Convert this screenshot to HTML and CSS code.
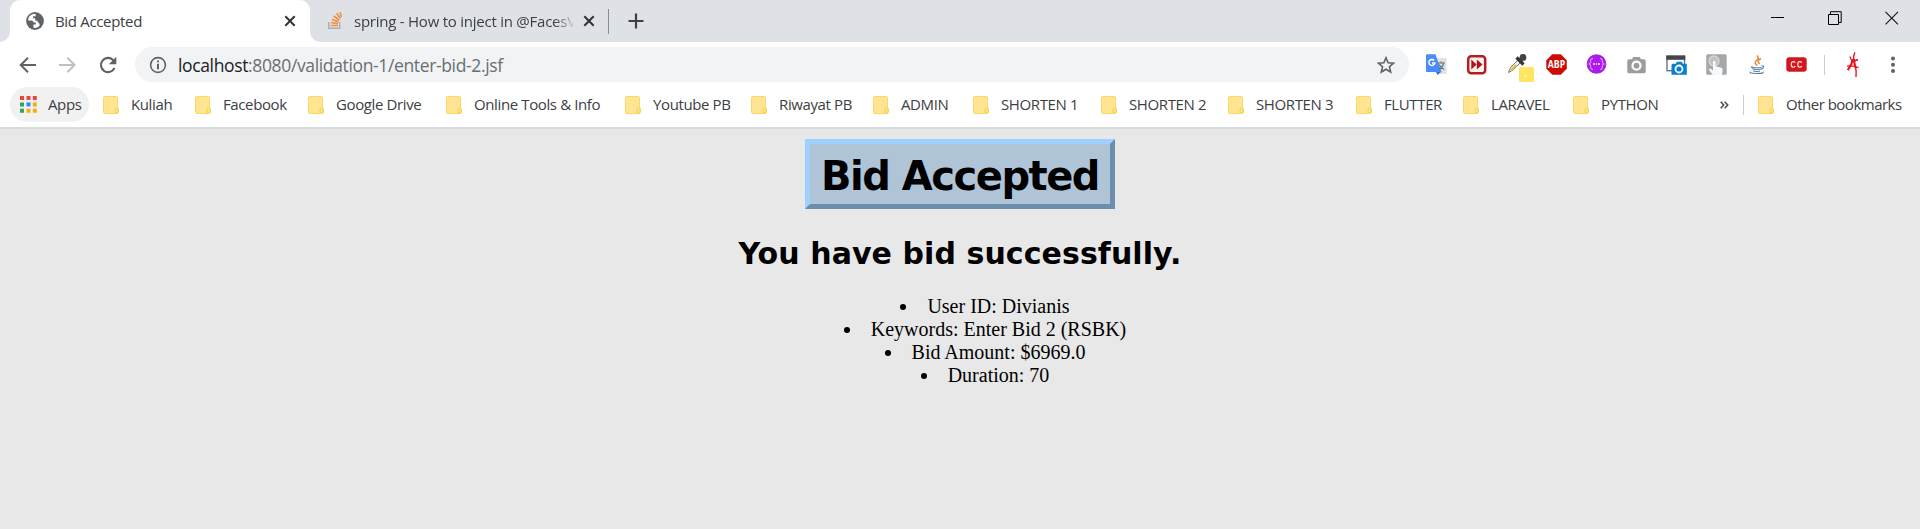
FILE: index.html
```html
<!DOCTYPE html>
<html lang="en">
<head>
<meta charset="utf-8">
<title>Bid Accepted</title>
<link rel="stylesheet" href="styles.css">
</head>
<body>
<svg class="defs" width="0" height="0">
  <symbol id="folder" viewBox="0 0 16 18">
    <path d="M1.5.5h12a1 1 0 0 1 1 1v10.200l1 1.300v3.500l-1.500 1H1.500a1 1 0 0 1-1-1v-15a1 1 0 0 1 1-1z" fill="#ffe591" stroke="#f9d867"/>
    <path d="M12 17v-4.300l1.500-1.200 1.500 1.500v3.500l-1.500.8z" fill="#ffe48a" stroke="#f5d052"/>
  </symbol>
  <symbol id="close" viewBox="0 0 12 12"><path d="M1.300 1.300l9.400 9.400M10.700 1.300L1.300 10.700" stroke="#303336" stroke-width="2"/></symbol>
</svg>

<header class="browser">
  <div class="tabstrip">
    <div class="tab tab-active">
      <svg class="favicon" width="18" height="18" viewBox="0 0 18 18"><circle cx="9" cy="9" r="8.900" fill="#5f6368"/><path d="M6.300 2.300C3.500 3.400 2 6 2.100 8.600h3.200c1.400 0 2 .9 2.300 1.800h2.200v2.200H7.500v3.200c2.600.5 4.800-.5 6.200-2.200l-.3-1.900c-.3-1-1.100-1.300-1.800-1.300V8.800h-1.200c-.7 0-1.200-.4-1.200-1V6.300H7.100V4.200h2.600V2.100c-1.200-.2-2.400-.1-3.400.2z" fill="#fff"/></svg>
      <span class="tab-title">Bid Accepted</span>
      <svg class="tab-close" width="12" height="12"><use href="#close"/></svg>
    </div>
    <div class="tab tab-idle">
      <svg class="favicon" width="17" height="18" viewBox="0 0 17 18"><path d="M1.700 10v6.200h11V10" fill="none" stroke="#aaadb2" stroke-width="1.500"/><path d="M3.800 13.500h7M4 10.500l7 1.300M4.900 7.300l6.600 2.600M6.800 4l5.500 4.300M9.600 1.300l3.900 5.300M13 .2l1.300 4.800" stroke="#f48b37" stroke-width="1.600"/></svg>
      <span class="tab-title">spring - How to inject in @FacesV</span>
      <svg class="tab-close" width="12" height="12"><use href="#close"/></svg>
    </div>
    <span class="tab-divider"></span>
    <svg class="new-tab" width="16" height="16" viewBox="0 0 16 16"><path d="M8 .5v15M.5 8h15" stroke="#3c4043" stroke-width="2.200"/></svg>
    <div class="window-controls">
      <svg width="14" height="14" viewBox="0 0 14 14"><path d="M0 6.500h13" stroke="#000"/></svg>
      <svg width="14" height="14" viewBox="0 0 14 14"><path d="M.5 3.500h10v10H.5zM2.500 3.500v-2.800h10.700v10.800H10.500" fill="none" stroke="#000"/></svg>
      <svg width="14" height="14" viewBox="0 0 14 14"><path d="M.5.8l12.500 12.500M13 .8L.5 13.300" stroke="#111" stroke-width="1.100"/></svg>
    </div>
  </div>

  <div class="toolbar">
    <nav class="nav">
      <svg width="18" height="18" viewBox="0 0 18 18"><path d="M17 9H2M9 1.700L1.700 9 9 16.300" fill="none" stroke="#5f6368" stroke-width="2"/></svg>
      <svg width="18" height="18" viewBox="0 0 18 18"><path d="M0 9h15M8.300 1.700L15.600 9l-7.300 7.300" fill="none" stroke="#bdc1c6" stroke-width="2"/></svg>
      <svg width="18" height="18" viewBox="0 0 18 18"><path d="M15.500 12A7.100 7.100 0 1 1 14 3.900l1.200 1.200" fill="none" stroke="#5f6368" stroke-width="2.100"/><path d="M17.300.800v7.400H9.900z" fill="#5f6368"/></svg>
    </nav>
    <div class="omnibox">
      <svg width="18" height="18" viewBox="0 0 18 18"><circle cx="9" cy="9" r="7.400" fill="none" stroke="#5f6368" stroke-width="1.600"/><path d="M9 4.400v1.900M9 7.800v5.500" stroke="#5f6368" stroke-width="2"/></svg>
      <span class="url"><b>localhost</b>:8080/validation-1/enter-bid-2.jsf</span>
      <svg class="star" width="18" height="18" viewBox="0 0 18 18"><path d="M9 1.800l2.150 4.900 5.300.5-4 3.550 1.200 5.250L9 13.200 4.350 16l1.200-5.250-4-3.550 5.300-.5z" fill="none" stroke="#5f6368" stroke-width="1.600"/></svg>
    </div>
    <div class="extensions">
      <svg viewBox="0 0 40 36"><path d="M20 11h9.500q1 0 1 1v14q0 1-1 1H24z" fill="#dfe1e4"/><path d="M11 7.300h8.500L25.500 25H11q-1 0-1-1V8.300q0-1 1-1z" fill="#4b8df8"/><path d="M20 25h5l-3.500 3z" fill="#3367d6"/><path d="M21.800 16h7M25.200 14.500v2M27.500 16.500q-1 4.500-5 6M23.200 17.500q1.500 3.500 5 5" fill="none" stroke="#5f7380" stroke-width="1.200"/><path d="M18.200 13.500a3 3 0 1 0 .6 2.600H16" fill="none" stroke="#fff" stroke-width="1.500"/></svg>
      <svg viewBox="0 0 40 36"><rect x="12.200" y="9.200" width="17" height="17" rx="3" fill="#fbf3f2" stroke="#b81d1d" stroke-width="2.500"/><path d="M15.300 12.500l5.300 5-5.300 5zM20.800 12.500l5.700 5-5.700 5z" fill="#b01515"/></svg>
      <svg viewBox="0 0 40 36"><path d="M12.500 25.500l2-5 8.500-8.500 2.500 2.500-8.500 8.500z" fill="#f2ede0" stroke="#73767a"/><path d="M14.500 23.500l5.500-5.500" stroke="#e4c94e" stroke-width="2.300"/><path d="M20.500 10.500l7 7M23.500 13.500l4-4" stroke="#333" stroke-width="3.200"/><circle cx="27" cy="10.500" r="3.400" fill="#444"/><rect x="23" y="20" width="15" height="15" rx="1.500" fill="#fee662"/><circle cx="29.500" cy="28.800" r=".8" fill="#fff"/></svg>
      <svg viewBox="0 0 40 36"><path d="M16.300 7.300h8.500l6 6v8.500l-6 6h-8.500l-6-6v-8.500z" fill="#cc0b05"/><text class="icon-text" x="20.500" y="21.300" textLength="17.500" lengthAdjust="spacingAndGlyphs">ABP</text></svg>
      <svg viewBox="0 0 40 36"><circle cx="20.500" cy="17" r="9.800" fill="#a91de8"/><path d="M17 11.500q-2.600 0-2.300 2.500.2 2.500-1.500 3 1.700.5 1.500 3-.3 2.500 2.300 2.500M24 11.500q2.600 0 2.300 2.500-.2 2.500 1.500 3-1.700.5-1.500 3 .3 2.500-2.300 2.500" fill="none" stroke="#dd95f5" stroke-width="1.200"/><path d="M17 17h2M19.800 17h1.400M22 17h2" stroke="#f4dcfb" stroke-width="1.600"/></svg>
      <svg viewBox="0 0 40 36"><path d="M13 12.300h3l1.200-2.300h6.600l1.200 2.300h3q1.700 0 1.700 1.500v11q0 1.500-1.700 1.500H13q-1.700 0-1.700-1.500v-11q0-1.500 1.700-1.500z" fill="#9c9c9c"/><circle cx="20.500" cy="18.700" r="4" fill="#9c9c9c" stroke="#fff" stroke-width="2.200"/></svg>
      <svg viewBox="0 0 40 36"><rect x="11" y="9.200" width="17.500" height="14.500" fill="#fff" stroke="#62696f" stroke-width="1.300"/><path d="M10.300 8.500h19v4.300h-19z" fill="#40464c"/><path d="M16.500 16.700h3.300l1-2h5l1 2h4v11H15.500v-10z" fill="#087fce"/><circle cx="23" cy="22" r="3.500" fill="#087fce" stroke="#fff" stroke-width="1.800"/></svg>
      <svg viewBox="0 0 40 36"><rect x="10.200" y="7.200" width="20.500" height="20.500" rx="1.500" fill="#a7a7a7"/><circle cx="18" cy="14" r="5" fill="#c2c2c2" stroke="#d7d7d7" stroke-width="1.300"/><path d="M16.800 28l-4-5.500q1-1.500 2.200-.5l2 1.500v-9q1.500-1.700 2.500 0v4.800l6 1.500q1.300.5 1.200 2l-.7 5.200z" fill="#f5faff"/></svg>
      <svg viewBox="0 0 40 36"><path d="M21 8.500q2.500 3-.5 5-3 2.200.8 5M25 11.500q-5 2-1.300 5.500" fill="none" stroke="#e9862d" stroke-width="1.500"/><path d="M16.500 19.500q-3 1.200 3 1.200t6-.8M16.500 21.800q3 1.400 8 .2M17 23.800q3 1.400 7 .2M14.500 24.800q-2 1.600 6 1.700t6.500-1.700M25.500 19q3-.5 2 1.500-1 1.700-3 1.700" fill="none" stroke="#557f9f" stroke-width="1.100"/></svg>
      <svg viewBox="0 0 40 36"><rect x="10.300" y="10.200" width="20.400" height="14.500" rx="3" fill="#d31720"/><path d="M19.300 15.700q-1-1.200-2.300-1-1.700.2-1.700 2.800t1.700 2.700q1.300.2 2.300-1M25.800 15.700q-1-1.200-2.300-1-1.700.2-1.700 2.800t1.700 2.700q1.300.2 2.300-1" fill="none" stroke="#ffdede" stroke-width="1.200"/></svg>
    </div>
    <span class="toolbar-divider"></span>
    <svg class="profile" width="14" height="26" viewBox="0 0 14 26"><path d="M9 .3Q7.400 3 7.600 7M4 4.500Q4.300 7 6.500 9M1 14.200Q6 13 12.700 15.500" fill="none" stroke="#ec1018" stroke-width="1.300"/><path d="M7 7Q6 12.500 1.800 18.200M8 7Q8.200 12 9.800 16.500" fill="none" stroke="#ec1018" stroke-width="2.100"/><path d="M9.600 15Q10.500 20 10 25M12 7.500L8.500 9" fill="none" stroke="#ec1018" stroke-width="1.400"/></svg>
    <svg class="menu" width="4" height="18" viewBox="0 0 4 18"><g fill="#5f6368"><circle cx="2" cy="2.500" r="2"/><circle cx="2" cy="8.700" r="2"/><circle cx="2" cy="15" r="2"/></g></svg>
  </div>

  <div class="bookmarks">
    <div class="apps">
      <svg width="17" height="17" viewBox="0 0 17 17"><path d="M0 0h4v4H0zM6.500 0h4v4h-4zM12.800 0h4v4h-4z" fill="#f0433a"/><path d="M0 6.400h4v4H0zM0 12.800h4v4H0z" fill="#2fa45a"/><path d="M6.500 6.400h4v4h-4z" fill="#2d8cf0"/><path d="M12.800 6.400h4v4h-4zM6.500 12.800h4v4h-4zM12.800 12.800h4v4h-4z" fill="#f5ad14"/></svg>
      <span>Apps</span>
    </div>
    <div class="folders">
      <div class="folder"><svg><use href="#folder"/></svg><span>Kuliah</span></div>
      <div class="folder"><svg><use href="#folder"/></svg><span>Facebook</span></div>
      <div class="folder"><svg><use href="#folder"/></svg><span>Google Drive</span></div>
      <div class="folder"><svg><use href="#folder"/></svg><span>Online Tools &amp; Info</span></div>
      <div class="folder"><svg><use href="#folder"/></svg><span>Youtube PB</span></div>
      <div class="folder"><svg><use href="#folder"/></svg><span>Riwayat PB</span></div>
      <div class="folder"><svg><use href="#folder"/></svg><span>ADMIN</span></div>
      <div class="folder"><svg><use href="#folder"/></svg><span>SHORTEN 1</span></div>
      <div class="folder"><svg><use href="#folder"/></svg><span>SHORTEN 2</span></div>
      <div class="folder"><svg><use href="#folder"/></svg><span>SHORTEN 3</span></div>
      <div class="folder"><svg><use href="#folder"/></svg><span>FLUTTER</span></div>
      <div class="folder"><svg><use href="#folder"/></svg><span>LARAVEL</span></div>
      <div class="folder"><svg><use href="#folder"/></svg><span>PYTHON</span></div>
    </div>
    <svg class="more" width="9" height="8" viewBox="0 0 9 8"><path d="M.7.700L3.700 4 .7 7.300M4.700.700l3 3.300-3 3.300" fill="none" stroke="#4b4f53" stroke-width="1.600"/></svg>
    <span class="bookmark-divider"></span>
    <div class="folder other"><svg><use href="#folder"/></svg><span>Other bookmarks</span></div>
  </div>
</header>

<main class="page">
  <h1 class="title">Bid Accepted</h1>
  <h2 class="subtitle">You have bid successfully.</h2>
  <ul class="details">
    <li>User ID: Divianis</li>
    <li>Keywords: Enter Bid 2 (RSBK)</li>
    <li>Bid Amount: $6969.0</li>
    <li>Duration: 70</li>
  </ul>
</main>
</body>
</html>
```

FILE: styles.css
```css
* { box-sizing: border-box; }
html, body { margin: 0; height: 100%; overflow: hidden; background: #e8e8e8; }
svg { display: block; flex: none; }
.defs { display: none; }

.browser {
  height: 129px;
  background: #fff;
  border-bottom: 2px solid #dadce0;
  font: 15px/20px "Open Sans", "Noto Sans", sans-serif;
  color: #3c4043;
  white-space: nowrap;
}

/* tabs */
.tabstrip { display: flex; align-items: center; height: 42px; background: #dee1e6; }
.tab { display: flex; align-items: center; height: 42px; }
.tab-active {
  position: relative;
  width: 300px;
  margin-left: 10px;
  padding-left: 16px;
  background: #fff;
  border-radius: 10px 10px 0 0;
}
.tab-active::before, .tab-active::after {
  content: "";
  position: absolute;
  bottom: 0;
  width: 10px;
  height: 10px;
}
.tab-active::before { left: -10px; background: radial-gradient(circle at 0 0, #dee1e6 9.5px, #fff 10px); }
.tab-active::after { right: -10px; background: radial-gradient(circle at 100% 0, #dee1e6 9.5px, #fff 10px); }
.tab-idle { width: 298px; padding-left: 17px; }
.tab .tab-title { width: 219px; margin-left: 10px; padding-bottom: 1px; letter-spacing: -0.24px; }
.tab-active .tab-title { margin-left: 11px; letter-spacing: -0.33px; }
.tab-idle .tab-title { -webkit-mask-image: linear-gradient(90deg, #000 200px, transparent 222px); mask-image: linear-gradient(90deg, #000 200px, transparent 222px); }
.tab-close { margin-left: 10px; }
.tab-divider { width: 1px; height: 25px; background: #868b90; }
.new-tab { margin-left: 19px; }
.window-controls { display: flex; gap: 43px; margin-left: auto; margin-right: 21px; padding-bottom: 6px; }

/* toolbar */
.toolbar { display: flex; align-items: center; height: 45px; }
.nav { display: flex; gap: 22px; width: 135px; padding-left: 19px; }
.omnibox {
  display: flex;
  align-items: center;
  width: 1274px;
  height: 35px;
  padding: 0 14px;
  border-radius: 18px;
  background: #f1f3f4;
}
.url { margin-left: 11px; font-size: 17.5px; color: #6a6e73; letter-spacing: -0.36px; }
.url b { font-weight: 400; color: #202124; }
.star { margin-left: auto; }
.extensions { display: flex; margin-left: 7px; }
.extensions svg { width: 40px; height: 36px; }
.icon-text { font: 700 10.5px "Open Sans", sans-serif; letter-spacing: 0; fill: #fff; text-anchor: middle; }
.toolbar-divider { width: 1px; height: 20px; margin-left: 8px; background: #c9ccd0; }
.profile { margin-left: 21px; }
.menu { margin-left: 31px; }

/* bookmarks */
.bookmarks { display: flex; align-items: center; height: 35px; letter-spacing: -0.38px; }
.bookmarks span { padding-bottom: 2px; }
.apps {
  display: flex;
  align-items: center;
  gap: 11px;
  width: 79px;
  height: 35px;
  margin-left: 10px;
  padding-left: 10px;
  border-radius: 18px;
  background: #f1f1f1;
}
.folders {
  display: grid;
  grid-template-columns: 92px 113px 138px 179px 126px 122px 100px 128px 127px 128px 107px 110px 147px;
  margin-left: 14px;
}
.folder { display: flex; align-items: center; gap: 12px; }
.folder svg { width: 16px; height: 18px; }
.bookmarks .bookmark-divider { width: 1px; height: 20px; margin-left: 14px; padding: 0; background: #c9ccd0; }
.other { margin-left: 14px; letter-spacing: -0.5px; }

/* page */
.page { display: flex; flex-direction: column; align-items: center; padding-top: 10px; color: #000; }
.title {
  width: 310px;
  height: 70px;
  margin: 0;
  border: 5px solid;
  border-color: #9dd0ff #6b8ead #6b8ead #9dd0ff;
  background: #b0c4d8;
  font: bold 40px/64px "DejaVu Sans", Verdana, sans-serif;
  text-align: center;
  white-space: nowrap;
  letter-spacing: -1.5px;
}
.subtitle {
  margin: 26px 0 0;
  font: bold 30px/38px "DejaVu Sans", Verdana, sans-serif;
  letter-spacing: 0.07px;
  white-space: nowrap;
}
.details {
  align-self: stretch;
  margin: 22px 8px 0;
  padding: 0 0 0 50px;
  font: 20px/23px "Liberation Serif", "Times New Roman", serif;
  text-align: center;
  list-style-position: inside;
}
```
